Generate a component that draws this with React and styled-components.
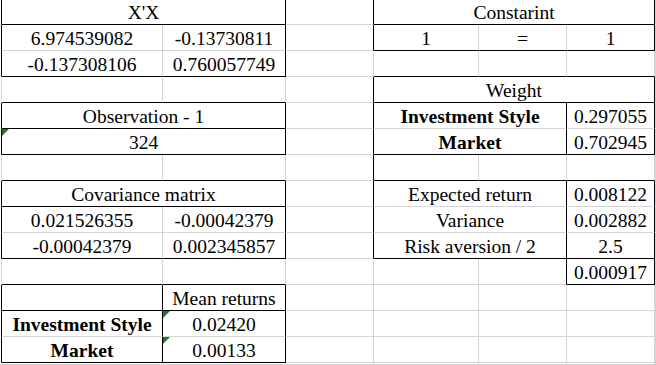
import React from "react";
import styled, { createGlobalStyle } from "styled-components";

const GlobalStyle = createGlobalStyle`
  html, body {
    margin: 0;
    padding: 0;
    background: #ffffff;
    overflow: hidden;
  }
`;

const Sheet = styled.div`
  display: grid;
  grid-template-columns: 2px 161px 123px 88px 105px 88px 88px 1fr;
  grid-template-rows: 25px repeat(13, 26px) 1fr;
  width: 100vw;
  height: 100vh;
  background: #ffffff;
`;

const Cell = styled.div`
  position: relative;
  box-sizing: border-box;
  grid-column: span ${(p) => p.$span || 1};
  display: flex;
  align-items: flex-end;
  justify-content: center;
  border-right: 1px solid ${(p) => (p.$rb ? "#000000" : "#d4d4d4")};
  border-bottom: 1px solid ${(p) => (p.$bb ? "#000000" : "#d4d4d4")};
  font-family: "Liberation Serif", "Times New Roman", serif;
  font-size: 19.5px;
  font-weight: ${(p) => (p.$bold ? 700 : 400)};
  line-height: 22px;
  color: #000000;
  white-space: nowrap;
  overflow: hidden;
`;

// Excel's little green "number stored as text" marker
const Flag = styled.span`
  position: absolute;
  top: 0;
  left: 0;
  width: 0;
  height: 0;
  border-top: 7px solid #1f7a1f;
  border-right: 7px solid transparent;
`;

const P = { rb: 1 };

const rows = [
  [P, { span: 2, text: "X'X", rb: 1, bb: 1 }, { rb: 1 }, { span: 3, text: "Constarint", rb: 1, bb: 1 }, {}],
  [P, { text: "6.974539082" }, { text: "-0.13730811", rb: 1 }, { rb: 1 }, { text: "1", bb: 1 }, { text: "=", bb: 1 }, { text: "1", rb: 1, bb: 1 }, {}],
  [P, { text: "-0.137308106", bb: 1 }, { text: "0.760057749", rb: 1, bb: 1 }, {}, { bb: 1 }, { bb: 1 }, { bb: 1 }, {}],
  [{}, { bb: 1 }, { bb: 1 }, { rb: 1 }, { span: 3, text: "Weight", rb: 1, bb: 1 }, {}],
  [P, { span: 2, text: "Observation - 1", rb: 1, bb: 1 }, { rb: 1 }, { span: 2, text: "Investment Style", bold: 1, rb: 1 }, { text: "0.297055", rb: 1 }, {}],
  [P, { span: 2, text: "324", rb: 1, bb: 1, flag: 1 }, { rb: 1 }, { span: 2, text: "Market", bold: 1, rb: 1, bb: 1 }, { text: "0.702945", rb: 1, bb: 1 }, {}],
  [{}, { bb: 1 }, { bb: 1 }, { rb: 1 }, { bb: 1 }, { bb: 1 }, { bb: 1 }, {}],
  [P, { span: 2, text: "Covariance matrix", rb: 1, bb: 1 }, { rb: 1 }, { span: 2, text: "Expected return", rb: 1 }, { text: "0.008122", rb: 1 }, {}],
  [P, { text: "0.021526355" }, { text: "-0.00042379", rb: 1 }, { rb: 1 }, { span: 2, text: "Variance", rb: 1 }, { text: "0.002882", rb: 1 }, {}],
  [P, { text: "-0.00042379", bb: 1 }, { text: "0.002345857", rb: 1, bb: 1 }, { rb: 1 }, { span: 2, text: "Risk aversion / 2", rb: 1, bb: 1 }, { text: "2.5", rb: 1, bb: 1 }, {}],
  [{}, { bb: 1 }, { bb: 1 }, {}, {}, { rb: 1 }, { text: "0.000917", rb: 1, bb: 1 }, {}],
  [P, { rb: 1, bb: 1 }, { text: "Mean returns", rb: 1, bb: 1 }, {}, {}, {}, {}, {}],
  [P, { text: "Investment Style", bold: 1, rb: 1 }, { text: "0.02420", rb: 1, flag: 1 }, {}, {}, {}, {}, {}],
  [P, { text: "Market", bold: 1, rb: 1, bb: 1 }, { text: "0.00133", rb: 1, bb: 1, flag: 1 }, {}, {}, {}, {}, {}],
  [{}, {}, {}, {}, {}, {}, {}, {}],
];

const App = () => {
  return (
    <>
      <GlobalStyle />
      <Sheet>
        {rows.map((row, r) =>
          row.map((c, i) => (
            <Cell key={`${r}-${i}`} $span={c.span} $rb={c.rb} $bb={c.bb} $bold={c.bold}>
              {c.flag && <Flag />}
              {c.text}
            </Cell>
          ))
        )}
      </Sheet>
    </>
  );
};

export default App;
